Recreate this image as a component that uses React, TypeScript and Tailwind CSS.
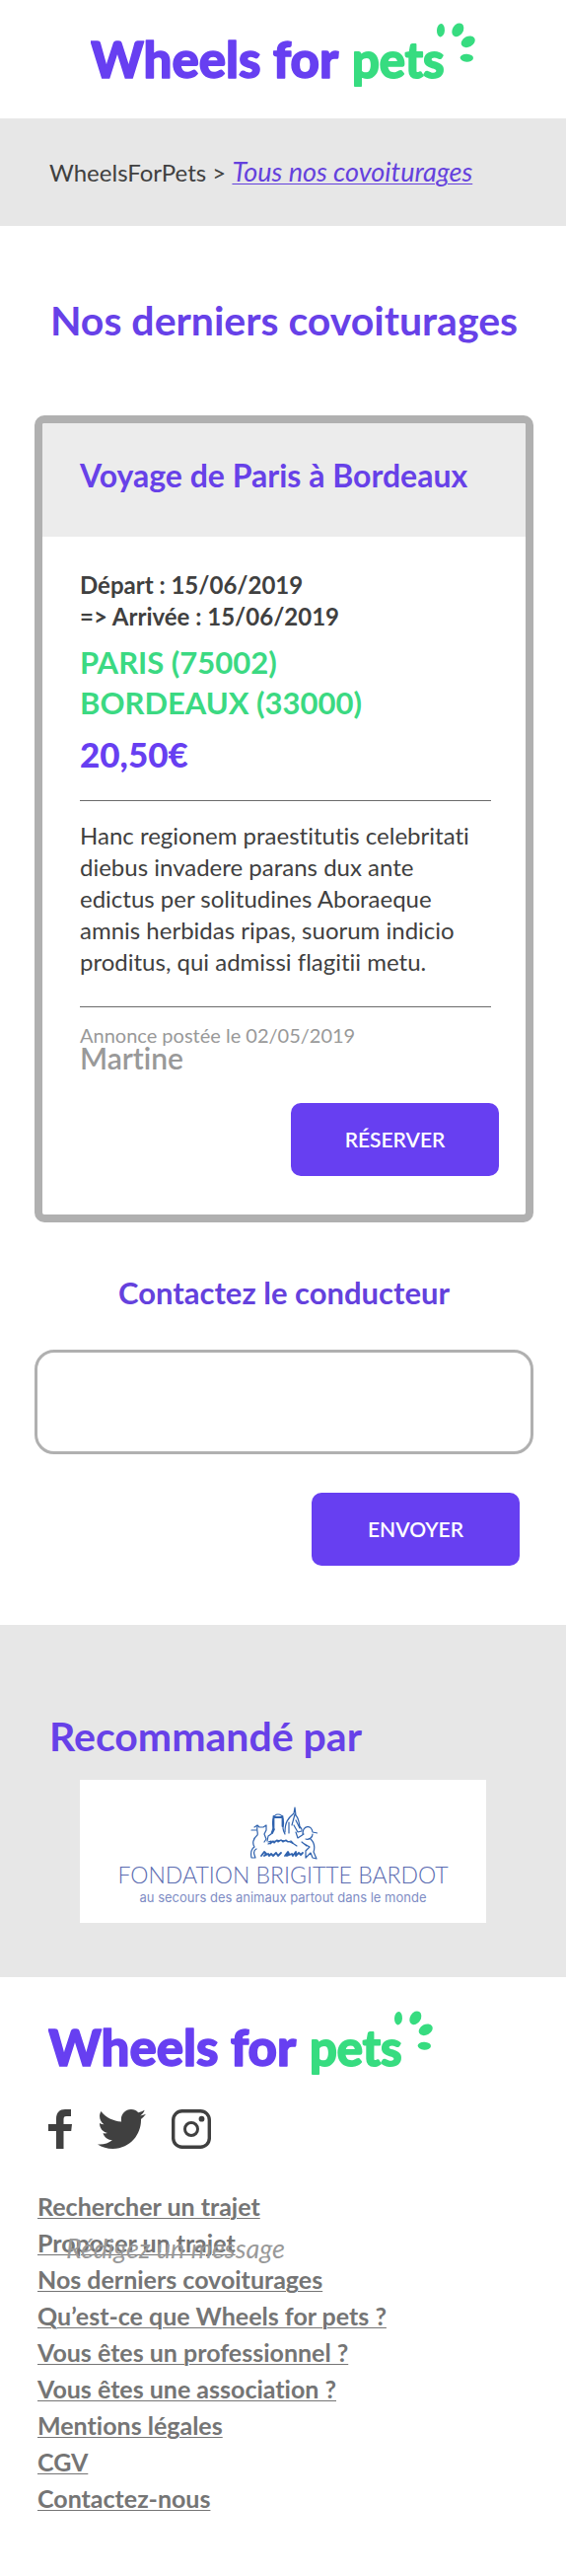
import React from "react";

const LINKS = [
  "Rechercher un trajet",
  "Proposer un trajet",
  "Nos derniers covoiturages",
  "Qu’est-ce que Wheels for pets ?",
  "Vous êtes un professionnel ?",
  "Vous êtes une association ?",
  "Mentions légales",
  "CGV",
  "Contactez-nous",
];

function Logo() {
  return (
    <svg width="390" height="80" viewBox="0 0 390 80" role="img" aria-label="Wheels for pets">
      <g className="font-['Lato',sans-serif]" strokeLinejoin="round">
        <text x="0" y="59" className="text-[51px] font-black" fill="#673ff1" stroke="#673ff1" strokeWidth="1.5">
          Wheels for
        </text>
        <text x="265" y="59" className="text-[49px] font-bold" fill="#37dc80" stroke="#37dc80" strokeWidth="2">
          pets
        </text>
      </g>
      <g fill="#37dc80">
        <ellipse cx="355" cy="10.7" rx="4" ry="6.7" transform="rotate(4 355 10.7)" />
        <ellipse cx="372.3" cy="10.3" rx="5.4" ry="7.4" transform="rotate(32 372.3 10.3)" />
        <ellipse cx="382.7" cy="22.3" rx="5.3" ry="7.4" transform="rotate(62 382.7 22.3)" />
        <ellipse cx="381.3" cy="38.7" rx="6.7" ry="4" transform="rotate(3 381.3 38.7)" />
      </g>
    </svg>
  );
}

function Sponsor() {
  return (
    <div className="mx-[81px] mt-5 flex h-[145px] flex-col items-center bg-white pt-[27px]">
      <svg width="70" height="54" viewBox="0 0 70 54" fill="none" stroke="#2f62ae" strokeWidth="1.2" strokeLinecap="round" strokeLinejoin="round">
        <path d="M3 24h5M6 21l3-2 2 2h4l3-2v5l-2 4 2 5-2 3" />
        <path d="M9 20c-1 5 1 7 0 9-5 4-5 9-3 12-3 2-4 6-3 11h4l-1-3c-1-3 0-5 2-6" />
        <path d="M19 35l1-5 3-2 2-6c-1-5-1-14 5-14s6 8 5 14c0 2 1 4 2 6" />
        <path d="M25.500 10v12M34.500 10v10M27 11h6M26 23l-2 4" strokeWidth="1.800" />
        <path d="M37 26c0-10 3-14 9-19l1-6 1 8c3 3 3 7 4 11 1 2 3 3 2 5l-4 1-4-7M41 27V16M47 8l-3 11M48 14l4 8" />
        <path d="M48 26l2 6 6-4M55 28c0-9 9-10 10-2l5 1M65 28c0 4-4 6-7 5M63 33c5 5 4 10 3 13l3 7-4-1-2-5-5 5v-7l4-4-7-4M54 36l5 4" />
        <path d="M20 38c9-5 20-5 29 2" />
        <path d="M20 36l3-1-1 3 3-3 1 2 3-3 1 2 3-2 2 2 3-2 2 2 3-1 2 2" />
        <path d="M13 50l3-4 2 2-2 2 4-2 1 2 2-2 2 2 3-3 2 3 3-3M37 50l3-4 1 2-2 2 5-2 1 2 3-4v4l3-3 2 2 2-2" strokeWidth="1.800" />
      </svg>
      <p className="text-[23px] leading-[30px] font-light whitespace-nowrap text-[#5a6bb0]">
        FONDATION BRIGITTE BARDOT
      </p>
      <p className="font-['Inter',sans-serif] text-[13px] leading-4 whitespace-nowrap text-[#7e8cc4]">
        au secours des animaux partout dans le monde
      </p>
    </div>
  );
}

const BUTTON =
  "h-[74px] w-[211px] rounded-[10px] bg-[#673ff1] text-[21px] leading-6 font-semibold text-white";

export default function App() {
  return (
    <div className="bg-white font-['Lato',sans-serif] text-[#404040] [font-variant-ligatures:no-common-ligatures]">
      <header className="flex justify-center py-5">
        <Logo />
      </header>

      <nav aria-label="Fil d’Ariane" className="bg-[#e7e7e7] px-[50px] pt-[39px] pb-[38px] text-[24px] leading-8">
        WheelsForPets &gt;{" "}
        <a href="#covoiturages" className="text-[27px] leading-7 text-[#6441dd] italic underline decoration-1 underline-offset-2">
          Tous nos covoiturages
        </a>
      </nav>

      <main id="covoiturages" className="pt-[72px] pr-[33px] pb-[60px] pl-[35px]">
        <h1 className="text-center text-[41px] leading-[48px] font-bold text-[#6741e8]">
          Nos derniers covoiturages
        </h1>

        <article className="mt-[72px] overflow-hidden rounded-[10px] border-8 border-[#b0b0b0]">
          <h2 className="bg-[#ececec] pt-[33px] pb-[42px] pl-[38px] text-[32px] leading-10 font-bold text-[#6741e8]">
            Voyage de Paris à Bordeaux
          </h2>
          <div className="pt-[33px] pr-[27px] pb-[39px] pl-[38px]">
            <p className="text-[24px] leading-8 font-bold">
              Départ : 15/06/2019
              <br />
              =&gt; Arrivée : 15/06/2019
            </p>
            <p className="mt-[10px] text-[31px] leading-[41px] font-bold text-[#3bd982]">
              PARIS (75002)
              <br />
              BORDEAUX (33000)
            </p>
            <p className="mt-[10px] text-[35px] leading-[42px] font-black text-[#673ff1]">20,50€</p>
            <hr className="mt-[26px] mr-2 border-[#6b6b6b]" />
            <p className="mt-[19px] text-[24px] leading-8">
              Hanc regionem praestitutis celebritati
              <br />
              diebus invadere parans dux ante
              <br />
              edictus per solitudines Aboraeque
              <br />
              amnis herbidas ripas, suorum indicio
              <br />
              proditus, qui admissi flagitii metu.
            </p>
            <hr className="mt-[29px] mr-2 border-[#6b6b6b]" />
            <p className="mt-5 text-[20px] leading-4 text-[#999]">Annonce postée le 02/05/2019</p>
            <p className="text-[30px] leading-[30px] font-semibold text-[#999]">Martine</p>
            <div className="mt-[31px] flex justify-end">
              <button type="button" className={BUTTON}>
                RÉSERVER
              </button>
            </div>
          </div>
        </article>

        <form className="mt-[51px] flex flex-col">
          <label htmlFor="message" className="text-center text-[31px] leading-10 font-bold text-[#6441dd]">
            Contactez le conducteur
          </label>
          <textarea
            id="message"
            className="mt-[38px] block h-[106px] w-full resize-none rounded-[20px] border-3 border-[#b0b0b0] bg-white px-8 py-6 text-[24px]"
          />
          <div className="mt-[39px] mr-[14px] flex justify-end">
            <button type="button" className={BUTTON}>
              ENVOYER
            </button>
          </div>
        </form>
      </main>

      <section className="bg-[#e7e7e7] pt-[89px] pb-[55px]">
        <h2 className="px-[50px] text-[41px] leading-[48px] font-bold text-[#6741e8]">Recommandé par</h2>
        <Sponsor />
      </section>

      <footer className="pt-[31px] pb-[60px]">
        <div className="pl-[49px]">
          <Logo />
          <div className="mt-[23px] flex gap-[26px] text-[#404040]">
            <a href="#facebook" aria-label="Facebook">
              <svg width="24" height="40" viewBox="0 0 24 40" fill="currentColor">
                <path d="M8 40V22H0V15H8V10C8 3.200 11.500 0 17 0H23V7H18.500C16 7 15.500 8 15.500 10.500V15H24L23.200 22H15.500V40Z" />
              </svg>
            </a>
            <a href="#twitter" aria-label="Twitter">
              <svg width="49" height="40" viewBox="0 48 512 416" fill="currentColor">
                <path d="M459.37 151.716c.325 4.548.325 9.097.325 13.645 0 138.72-105.583 298.558-298.558 298.558-59.452 0-114.68-17.219-161.137-47.106 8.447.974 16.568 1.299 25.34 1.299 49.055 0 94.213-16.568 130.274-44.832-46.132-.975-84.792-31.188-98.112-72.772 6.498.974 12.995 1.624 19.818 1.624 9.421 0 18.843-1.3 27.614-3.573-48.081-9.747-84.143-51.98-84.143-102.985v-1.299c13.969 7.797 30.214 12.67 47.431 13.319-28.264-18.843-46.781-51.005-46.781-87.391 0-19.492 5.197-37.36 14.294-52.954 51.655 63.675 129.3 105.258 216.365 109.807-1.624-7.797-2.599-15.918-2.599-24.04 0-57.828 46.782-104.934 104.934-104.934 30.213 0 57.502 12.67 76.67 33.137 23.715-4.548 46.456-13.32 66.599-25.34-7.798 24.366-24.366 44.833-46.132 57.827 21.117-2.273 41.584-8.122 60.426-16.243-14.292 20.791-32.161 39.308-52.628 54.253z" />
              </svg>
            </a>
            <a href="#instagram" aria-label="Instagram">
              <svg width="40" height="40" viewBox="0 0 40 40" fill="none" stroke="currentColor">
                <rect x="1.700" y="1.700" width="36.600" height="36.600" rx="9" strokeWidth="3.400" />
                <circle cx="20" cy="20" r="6.500" strokeWidth="3" />
                <circle cx="30.500" cy="9.700" r="2.900" fill="currentColor" stroke="none" />
              </svg>
            </a>
          </div>
        </div>
        <nav aria-label="Pied de page" className="relative mt-10 ml-[38px]">
          <ul>
            {LINKS.map((label) => (
              <li key={label} className="text-[25px] leading-[37px] font-bold text-[#757575]">
                <a href="#lien" className="underline decoration-1 underline-offset-2">
                  {label}
                </a>
              </li>
            ))}
          </ul>
          <span className="pointer-events-none absolute top-[45px] left-[29px] text-[27px] leading-8 text-[#999] italic">
            Rédigez un message
          </span>
        </nav>
      </footer>
    </div>
  );
}
